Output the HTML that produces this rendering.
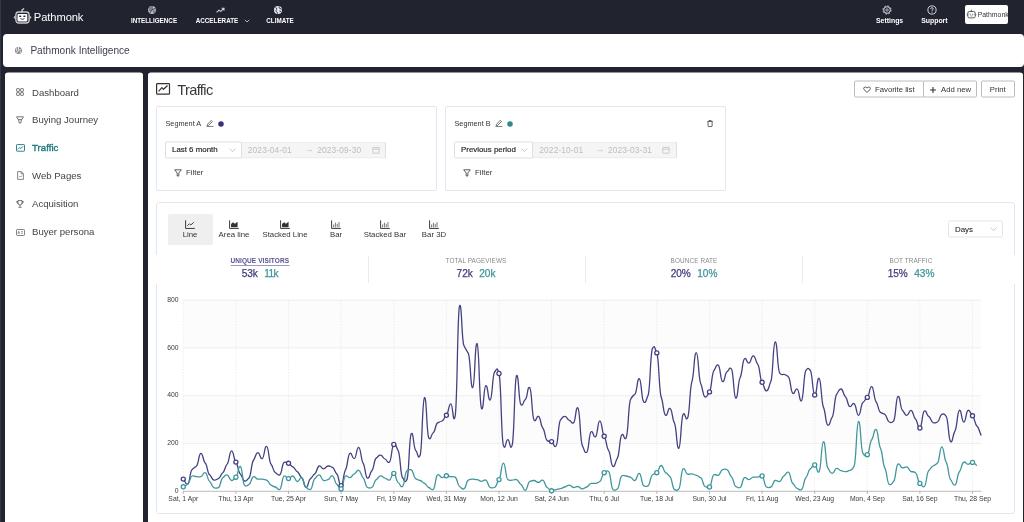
<!DOCTYPE html>
<html lang="en">
<head>
<meta charset="utf-8">
<title>Pathmonk Intelligence - Traffic</title>
<style>
*{box-sizing:border-box;margin:0;padding:0}
html,body{width:1024px;height:522px;overflow:hidden}
body{background:#21232f;font-family:"Liberation Sans",Arial,sans-serif;color:#3a3a3a;position:relative}
.abs{position:absolute}
.t{position:absolute;white-space:nowrap;line-height:1}
#wrap{position:absolute;left:0;top:0;width:1024px;height:522px;overflow:hidden;will-change:transform}
svg{position:absolute;overflow:visible}
/* header */
#leftedge{left:0;top:0;width:1.4px;height:522px;background:#343744}
#logo-text{left:33.8px;top:11.8px;font-size:11.2px;color:#fff;letter-spacing:-0.1px}
.nav{font-size:6.3px;font-weight:bold;color:#fff;transform:translateX(-50%);letter-spacing:0}
.navr{font-size:6.9px;color:#fff;transform:translateX(-50%);font-weight:bold}
#userbox{left:965.2px;top:5.2px;width:43.3px;height:19px;overflow:hidden;background:#fff;border-radius:2px}
/* subheader */
#subbar{left:3px;top:34px;width:1021.3px;height:33px;background:#fff;border-radius:4px}
#subbar .t{left:27.4px;top:11.7px;font-size:10.1px;color:#3d3f4a}
/* sidebar */
#side{left:5px;top:73px;box-shadow:0 -0.6px 0 #fff;width:137.7px;height:460px;background:#fff;border-radius:3px}
.si{left:27px;font-size:9.6px;color:#444}
.si.act{color:#17767c;-webkit-text-stroke:0.35px #17767c;letter-spacing:0.05px}
/* main */
#main{left:148px;top:73px;box-shadow:0 -0.6px 0 #fff;width:874.7px;height:460px;background:#fff;border-radius:3px}
#title{left:29.2px;top:9.7px;font-size:14.6px;color:#3a3a3a;letter-spacing:-0.62px}
.btn{position:absolute;top:7px;height:17px;transform:translateY(0.5px);border:1px solid #bdbdbd;border-radius:1.5px;background:#fff;font-size:7.75px;color:#333;white-space:nowrap;line-height:15.4px}
.card{position:absolute;border:1px solid #e4e5f1;border-radius:2px;background:#fff}
.seg{font-size:7.3px;color:#333}
.sel{position:absolute;transform:translateY(0.5px);height:17px;border:1px solid #dedfe4;border-radius:1.5px 0 0 1.5px;background:#fff;font-size:7.9px;color:#222;line-height:14.4px;-webkit-text-stroke:0.15px;padding-left:6px;white-space:nowrap}
.rng{position:absolute;transform:translateY(0.5px);height:17px;border:1px solid #dedfe4;border-left:none;border-radius:0 1.5px 1.5px 0;background:#f5f5f5;font-size:8.4px;letter-spacing:0.12px;color:#bdbdbd;line-height:14.4px;white-space:nowrap}
.flt{font-size:7.8px;color:#333}
.ct{font-size:7.8px;color:#333;transform:translateX(-50%)}
.sl{font-size:6.4px;color:#8a8a8a;transform:translateX(-50%);letter-spacing:0.1px}
.sv{font-size:10.1px;transform:translateX(-50%);word-spacing:3.5px;-webkit-text-stroke:0.25px}
.p{color:#3f3d7a}.g{color:#3d9599}
.vdiv{position:absolute;top:183px;width:1px;height:27px;background:#ebebeb}
.ax{font-family:"Liberation Sans",Arial,sans-serif;font-size:6.8px;fill:#3a3a3a}
</style>
</head>
<body>
<div id="wrap">
<div class="abs" id="leftedge"></div>

<!-- HEADER -->
<svg style="left:13.3px;top:7.7px" width="19" height="17" viewBox="0 0 19 17">
  <path d="M8.6 4 Q8.8 1.6 10.6 0.9" stroke="#c8c9ce" stroke-width="1.5" fill="none" stroke-linecap="round"/>
  <rect x="2.9" y="4" width="13.2" height="11" rx="2.8" fill="none" stroke="#c8c9ce" stroke-width="1.3"/>
  <path d="M2.9 7.6 L1.2 9.4 L2.9 11.2 M16.1 7.6 L17.8 9.4 L16.1 11.2" stroke="#c8c9ce" stroke-width="1.2" fill="none" stroke-linejoin="round"/>
  <rect x="4.5" y="6" width="9.8" height="7.4" rx="0.8" fill="#fff"/>
  <rect x="6.2" y="7.6" width="2" height="1.4" fill="#21232f"/>
  <rect x="10.4" y="7.6" width="2" height="1.4" fill="#21232f"/>
  <path d="M7.4 10.6 Q9.4 12.2 11.4 10.6" stroke="#21232f" stroke-width="0.9" fill="none"/>
</svg>
<div class="t" id="logo-text">Pathmonk</div>

<svg style="left:147px;top:5.2px" width="10" height="10" viewBox="0 0 10 10">
  <circle cx="5" cy="5" r="3.9" fill="#b9bac1"/>
  <path d="M5 5 L5 1 M5 5 L8.4 3.2 M5 5 L2.6 8.2 M3 2 L3 6 M7 5.5 L7 8" stroke="#21232f" stroke-width="0.8" fill="none"/>
</svg>
<div class="t nav" style="left:154px;top:17.5px">INTELLIGENCE</div>
<svg style="left:215.5px;top:7px" width="9" height="7" viewBox="0 0 9 7">
  <path d="M0.6 5.4 L3 3.2 L4.8 4.4 L7.6 1.6 M5.6 1.2 L8 1.2 L8 3.6" stroke="#d5d6db" stroke-width="1.1" fill="none"/>
</svg>
<div class="t nav" style="left:217px;top:17.5px">ACCELERATE</div>
<svg style="left:243.5px;top:18.5px" width="6" height="4" viewBox="0 0 6 4"><path d="M0.8 0.8 L3 3 L5.2 0.8" stroke="#d5d6db" stroke-width="0.8" fill="none"/></svg>
<svg style="left:273px;top:5px" width="10" height="10" viewBox="0 0 10 10">
  <circle cx="5" cy="5" r="4" fill="#e6e7ea"/>
  <path d="M2.6 2.2 Q4 3 3.6 4.4 Q2.6 5.4 3.4 6.6 Q4.6 7 4.6 8.6 M6.2 1.4 Q5.6 3 7 3.6 Q8.2 3.6 8.6 4.6 M6.4 6 Q7.6 5.8 7.8 7" stroke="#21232f" stroke-width="0.9" fill="none"/>
</svg>
<div class="t nav" style="left:280px;top:17.5px">CLIMATE</div>

<svg style="left:882.1px;top:5.3px" width="10" height="10" viewBox="0 0 10 10">
  <circle cx="5" cy="5" r="3.3" fill="none" stroke="#d5d6db" stroke-width="1"/>
  <circle cx="5" cy="5" r="4.1" fill="none" stroke="#d5d6db" stroke-width="1" stroke-dasharray="1.6 1.62"/>
  <circle cx="5" cy="5" r="1.2" fill="none" stroke="#d5d6db" stroke-width="0.8"/>
</svg>
<div class="t navr" style="left:889.6px;top:17.8px">Settings</div>
<svg style="left:926.5px;top:5.3px" width="10" height="10" viewBox="0 0 10 10">
  <circle cx="5" cy="5" r="4.1" fill="none" stroke="#d5d6db" stroke-width="1"/>
  <path d="M3.7 4 Q3.7 2.7 5 2.7 Q6.3 2.700 6.3 3.800 Q6.300 4.600 5 5.200 L5 5.900" stroke="#d5d6db" stroke-width="0.9" fill="none"/>
  <circle cx="5" cy="7.1" r="0.55" fill="#d5d6db"/>
</svg>
<div class="t navr" style="left:934.4px;top:17.8px">Support</div>
<div class="abs" id="userbox">
  <svg style="left:0.8px;top:4px" width="11" height="10" viewBox="0 0 19 17">
    <path d="M8.6 4 Q8.800 1.600 10.600 0.900" stroke="#444" stroke-width="1.500" fill="none"/>
    <rect x="3.2" y="4.2" width="12.6" height="11" rx="2.6" fill="none" stroke="#444" stroke-width="1.500"/>
    <path d="M3.2 8.2 L1.4 9.8 L3.2 11.400 M15.800 8.200 L17.600 9.800 L15.800 11.400" stroke="#444" stroke-width="1.300" fill="none"/>
    <rect x="6.4" y="8" width="1.800" height="1.600" fill="#444"/><rect x="10.800" y="8" width="1.800" height="1.600" fill="#444"/>
    <path d="M7.600 11.400 Q9.500 12.800 11.400 11.400" stroke="#444" stroke-width="1" fill="none"/>
  </svg>
  <div class="t" style="left:12.5px;top:6.9px;font-size:6.9px;color:#333">Pathmonk</div>
</div>

<!-- SUB HEADER -->
<div class="abs" id="subbar">
  <svg style="left:11px;top:12.3px" width="9" height="9" viewBox="0 0 10 10">
    <circle cx="5" cy="5" r="3.9" fill="#8a8b92"/>
    <path d="M5 5 L5 1 M5 5 L8.4 3.2 M5 5 L2.6 8.2 M3 2 L3 6 M7 5.5 L7 8" stroke="#fff" stroke-width="0.8" fill="none"/>
  </svg>
  <div class="t">Pathmonk Intelligence</div>
</div>

<!-- SIDEBAR -->
<div class="abs" id="side">
  <svg style="left:11px;top:15px" width="8" height="8" viewBox="0 0 8 8"><g fill="none" stroke="#555" stroke-width="0.8"><rect x="0.6" y="0.6" width="2.8" height="2.8" rx="0.5"/><rect x="4.6" y="0.6" width="2.8" height="2.8" rx="0.5"/><rect x="0.6" y="4.6" width="2.8" height="2.8" rx="0.5"/><rect x="4.6" y="4.6" width="2.8" height="2.8" rx="0.5"/></g></svg>
  <div class="t si" style="top:14.5px">Dashboard</div>
  <svg style="left:11px;top:43px" width="8" height="8" viewBox="0 0 8 8"><path d="M0.6 0.8 H7.4 L5.8 3.6 H2.2 Z M2.6 3.6 L3.2 7 H4.8 L5.4 3.6" fill="none" stroke="#555" stroke-width="0.8" stroke-linejoin="round"/></svg>
  <div class="t si" style="top:42.2px">Buying Journey</div>
  <svg style="left:11px;top:71px" width="9" height="8" viewBox="0 0 9 8"><rect x="0.5" y="0.6" width="8" height="6.6" rx="0.6" fill="none" stroke="#17747a" stroke-width="0.9"/><path d="M1.8 5.4 L3.6 3.6 L4.8 4.6 L7 2.4" fill="none" stroke="#17747a" stroke-width="0.9"/></svg>
  <div class="t si act" style="top:70.2px">Traffic</div>
  <svg style="left:12px;top:97.8px" width="7" height="9" viewBox="0 0 7 9"><path d="M0.6 0.6 H4.4 L6.4 2.6 V8.4 H0.6 Z M4.2 0.8 V2.8 H6.2" fill="none" stroke="#666" stroke-width="0.8" stroke-linejoin="round"/><path d="M2 6.4 L3 5.2 L3.8 6 L5 4.6" fill="none" stroke="#666" stroke-width="0.6"/></svg>
  <div class="t si" style="top:97.7px">Web Pages</div>
  <svg style="left:11px;top:127px" width="8" height="8" viewBox="0 0 8 8"><path d="M2 0.6 H6 V3 Q6 5 4 5 Q2 5 2 3 Z M2 1.4 H0.7 Q0.7 3.4 2.2 3.6 M6 1.4 H7.3 Q7.3 3.4 5.8 3.6 M4 5 V6.8 M2.4 7.3 H5.6" fill="none" stroke="#555" stroke-width="0.8" stroke-linejoin="round"/></svg>
  <div class="t si" style="top:125.7px">Acquisition</div>
  <svg style="left:11px;top:155.500px" width="9" height="7" viewBox="0 0 9 7"><rect x="0.5" y="0.5" width="8" height="6" rx="0.7" fill="none" stroke="#666" stroke-width="0.8"/><path d="M1.8 4.8 L2.7 2.2 L3.6 4.8 M2.1 4 H3.3 M5 2.6 H7 M5 4.2 H7" fill="none" stroke="#666" stroke-width="0.6"/></svg>
  <div class="t si" style="top:154.2px">Buyer persona</div>
</div>

<!-- MAIN -->
<div class="abs" id="main">
  <svg style="left:8.1px;top:10.3px" width="15" height="12" viewBox="0 0 15 12"><rect x="0.6" y="0.6" width="12.9" height="10.6" rx="0.8" fill="none" stroke="#333" stroke-width="1.2"/><path d="M2.6 8.3 L5.9 4.7 L7.5 6.3 L11.5 2.5" fill="none" stroke="#333" stroke-width="1.2"/></svg>
  <div class="t" id="title">Traffic</div>

  <div class="btn" style="left:706px;width:70px;padding-left:20px">Favorite list</div>
  <svg style="left:714.5px;top:12.6px" width="8" height="7.4" viewBox="0 0 8 7"><path d="M4 6.2 L1 3.4 Q0.2 2 1.2 1.1 Q2.6 0.3 4 1.8 Q5.400 0.3 6.800 1.1 Q7.800 2 7 3.4 Z" fill="none" stroke="#333" stroke-width="0.8" stroke-linejoin="round"/></svg>
  <div class="btn" style="left:775px;width:53.5px;padding-left:17px;border-radius:0 1.5px 1.5px 0">Add new</div>
  <svg style="left:781.6px;top:14.1px" width="6" height="6" viewBox="0 0 6 6"><path d="M3 0.1 V5.9 M0.1 3 H5.9" stroke="#2a2a2a" stroke-width="1.05"/></svg>
  <div class="btn" style="left:833px;width:33.5px;text-align:center">Print</div>

  <!-- Segment A -->
  <div class="card" style="left:8px;top:33px;width:280.5px;height:85px">
    <div class="t seg" style="left:8.5px;top:13px">Segment A</div>
    <svg style="left:49.4px;top:12.4px" width="8" height="8" viewBox="0 0 8 8"><path d="M1.4 5.400 L5.200 1.400 L6.400 2.600 L2.600 6.400 L1.200 6.600 Z" fill="none" stroke="#333" stroke-width="0.7" stroke-linejoin="round"/><path d="M0.600 7.500 H7.400" stroke="#333" stroke-width="0.6"/></svg>
    <svg style="left:61.3px;top:14px" width="6" height="6" viewBox="0 0 6 6"><circle cx="3" cy="3" r="2.75" fill="#34327a"/></svg>
    <div class="sel" style="left:8px;top:34px;width:76.5px">Last 6 month</div>
    <svg style="left:72.3px;top:41px" width="7" height="4.5" viewBox="0 0 7 4.5"><path d="M0.6 0.7 L3.5 3.6 L6.4 0.7" stroke="#b5b5b5" stroke-width="0.75" fill="none"/></svg>
    <div class="rng" style="left:84.5px;top:34px;width:144.5px"><span style="position:absolute;left:6.3px">2023-04-01</span><span style="position:absolute;left:63.5px;top:-0.8px;font-size:9px;letter-spacing:0;color:#c4c4c4">→</span><span style="position:absolute;left:75.7px">2023-09-30</span></div>
    <svg style="left:215px;top:39px" width="8" height="8" viewBox="0 0 8 8"><rect x="0.800" y="1.400" width="6.400" height="5.800" rx="0.500" fill="none" stroke="#bcbcbc" stroke-width="0.700"/><path d="M0.800 3.200 H7.200" stroke="#bcbcbc" stroke-width="0.700"/></svg>
    <svg style="left:17px;top:62px" width="8" height="8" viewBox="0 0 8 8"><path d="M0.700 0.800 H7.300 L4.800 4 V7 H3.200 V4 Z" fill="none" stroke="#333" stroke-width="0.800" stroke-linejoin="round"/></svg>
    <div class="t flt" style="left:29px;top:62px">Filter</div>
  </div>
  <!-- Segment B -->
  <div class="card" style="left:297px;top:33px;width:280.5px;height:85px">
    <div class="t seg" style="left:8.5px;top:13px">Segment B</div>
    <svg style="left:49.4px;top:12.4px" width="8" height="8" viewBox="0 0 8 8"><path d="M1.4 5.400 L5.200 1.400 L6.400 2.600 L2.600 6.400 L1.200 6.600 Z" fill="none" stroke="#333" stroke-width="0.7" stroke-linejoin="round"/><path d="M0.600 7.500 H7.400" stroke="#333" stroke-width="0.6"/></svg>
    <svg style="left:61.3px;top:14px" width="6" height="6" viewBox="0 0 6 6"><circle cx="3" cy="3" r="2.75" fill="#2e8a90"/></svg>
    <svg style="left:260.6px;top:13.2px" width="6.2" height="7.1" viewBox="0 0 7 8"><path d="M0.5 1.6 H6.5 M2.4 1.600 V0.600 H4.600 V1.600 M1.200 1.600 V6.800 Q1.200 7.400 1.800 7.400 H5.200 Q5.800 7.400 5.800 6.800 V1.600" fill="none" stroke="#333" stroke-width="0.85" stroke-linejoin="round"/></svg>
    <div class="sel" style="left:8px;top:34px;width:79px">Previous period</div>
    <svg style="left:75.3px;top:41px" width="7" height="4.5" viewBox="0 0 7 4.5"><path d="M0.6 0.7 L3.5 3.6 L6.4 0.7" stroke="#b5b5b5" stroke-width="0.75" fill="none"/></svg>
    <div class="rng" style="left:87px;top:34px;width:144px"><span style="position:absolute;left:6.3px">2022-10-01</span><span style="position:absolute;left:62.5px;top:-0.8px;font-size:9px;letter-spacing:0;color:#c4c4c4">→</span><span style="position:absolute;left:75px">2023-03-31</span></div>
    <svg style="left:216px;top:39px" width="8" height="8" viewBox="0 0 8 8"><rect x="0.800" y="1.400" width="6.400" height="5.800" rx="0.500" fill="none" stroke="#bcbcbc" stroke-width="0.700"/><path d="M0.800 3.200 H7.200" stroke="#bcbcbc" stroke-width="0.700"/></svg>
    <svg style="left:17px;top:62px" width="8" height="8" viewBox="0 0 8 8"><path d="M0.700 0.800 H7.300 L4.800 4 V7 H3.200 V4 Z" fill="none" stroke="#333" stroke-width="0.800" stroke-linejoin="round"/></svg>
    <div class="t flt" style="left:29px;top:62px">Filter</div>
  </div>

  <!-- Chart card -->
  <div class="card" style="left:8px;top:129px;width:859px;height:311.5px;border-radius:3px"></div>
  <div class="abs" style="left:20px;top:141px;width:44.5px;height:30.5px;background:#efefef;border-radius:2px"></div>
  <svg style="left:37.0px;top:146.6px" width="10.2" height="9" viewBox="0 0 9 8"><path d="M0.5 0.3V7.5H8.7" fill="none" stroke="#333" stroke-width="0.85"/><path d="M2 5.2L3.8 3.4L5.2 4.4L7.8 2" fill="none" stroke="#333" stroke-width="0.8"/></svg>
<svg style="left:81.0px;top:146.6px" width="10.2" height="9" viewBox="0 0 9 8"><path d="M0.5 0.3V7.5H8.7" fill="none" stroke="#333" stroke-width="0.85"/><path d="M1.8 6.4V3.6L3.6 2L5.2 3.4L7.6 1.6V6.4Z" fill="#333"/></svg>
<svg style="left:132.0px;top:146.6px" width="10.2" height="9" viewBox="0 0 9 8"><path d="M0.5 0.3V7.5H8.7" fill="none" stroke="#333" stroke-width="0.85"/><path d="M1.8 6.4V3.6L3.6 2L5.2 3.4L7.6 1.6V6.4Z" fill="#333"/></svg>
<svg style="left:183.0px;top:146.6px" width="10.2" height="9" viewBox="0 0 9 8"><path d="M0.5 0.3V7.5H8.7" fill="none" stroke="#333" stroke-width="0.85"/><path d="M2.3 6.6V4M3.9 6.6V2.4M5.5 6.6V3.4M7.1 6.6V1.8" fill="none" stroke="#555" stroke-width="0.7"/></svg>
<svg style="left:232.0px;top:146.6px" width="10.2" height="9" viewBox="0 0 9 8"><path d="M0.5 0.3V7.5H8.7" fill="none" stroke="#333" stroke-width="0.85"/><path d="M2.3 6.6V4M3.9 6.6V2.4M5.5 6.6V3.4M7.1 6.6V1.8" fill="none" stroke="#555" stroke-width="0.7"/></svg>
<svg style="left:281.0px;top:146.6px" width="10.2" height="9" viewBox="0 0 9 8"><path d="M0.5 0.3V7.5H8.7" fill="none" stroke="#333" stroke-width="0.85"/><path d="M2.3 6.6V4M3.9 6.6V2.4M5.5 6.6V3.4M7.1 6.6V1.8" fill="none" stroke="#555" stroke-width="0.7"/></svg>
  <div class="t ct" style="left:42px;top:158px">Line</div>
  <div class="t ct" style="left:86px;top:158px">Area line</div>
  <div class="t ct" style="left:137px;top:158px">Stacked Line</div>
  <div class="t ct" style="left:188px;top:158px">Bar</div>
  <div class="t ct" style="left:237px;top:158px">Stacked Bar</div>
  <div class="t ct" style="left:286px;top:158px">Bar 3D</div>
  <div class="sel" style="left:800px;top:147px;width:55px;border-color:#e2e4ec;border-radius:2px;line-height:15.6px;-webkit-text-stroke:0.05px">Days</div>
  <svg style="left:842.2px;top:153.9px" width="7" height="4.5" viewBox="0 0 7 4.5"><path d="M0.6 0.7 L3.5 3.6 L6.4 0.7" stroke="#b5b5b5" stroke-width="0.75" fill="none"/></svg>

  <!-- Stats -->
  <div class="abs" style="left:4px;top:182px;width:866px;height:28.500px;background:#fff"></div>
  <div class="t sl p" style="left:111.8px;top:185.4px;font-weight:bold;font-size:6.5px;color:#55538f;border-bottom:0.8px solid #9a98c0;padding-bottom:0.5px">UNIQUE VISITORS</div>
  <div class="t sv" style="left:111.8px;top:196px"><span class="p">53k</span> <span class="g" style="letter-spacing:-0.6px">11k</span></div>
  <div class="vdiv" style="left:220px"></div>
  <div class="t sl" style="left:328px;top:185.4px">TOTAL PAGEVIEWS</div>
  <div class="t sv" style="left:328px;top:196px"><span class="p">72k</span> <span class="g">20k</span></div>
  <div class="vdiv" style="left:437px"></div>
  <div class="t sl" style="left:546px;top:185.4px">BOUNCE RATE</div>
  <div class="t sv" style="left:546px;top:196px"><span class="p">20%</span> <span class="g">10%</span></div>
  <div class="vdiv" style="left:654px"></div>
  <div class="t sl" style="left:763px;top:185.4px">BOT TRAFFIC</div>
  <div class="t sv" style="left:763px;top:196px"><span class="p">15%</span> <span class="g">43%</span></div>
</div>

<!-- CHART -->
<svg style="left:0;top:0" width="1024" height="522" viewBox="0 0 1024 522">
<rect x="183.3" y="395.7" width="798.0" height="47.8" fill="#fcfcfc"/>
<rect x="183.3" y="300.1" width="798.0" height="47.8" fill="#fcfcfc"/>
<path d="M183.3 443.5H981.3" stroke="#efefef" stroke-width="1"/>
<path d="M183.3 395.7H981.3" stroke="#efefef" stroke-width="1"/>
<path d="M183.3 347.9H981.3" stroke="#efefef" stroke-width="1"/>
<path d="M183.3 300.1H981.3" stroke="#efefef" stroke-width="1"/>
<path d="M183.3 300.1V491.3" stroke="#e9e9e9" stroke-width="0.8" stroke-dasharray="1.5 1.5"/>
<path d="M183.3 491.3v2.5" stroke="#999" stroke-width="0.8"/>
<text class="ax" x="183.3" y="500.9" text-anchor="middle">Sat, 1 Apr</text>
<path d="M235.9 300.1V491.3" stroke="#e9e9e9" stroke-width="0.8" stroke-dasharray="1.5 1.5"/>
<path d="M235.9 491.3v2.5" stroke="#999" stroke-width="0.8"/>
<text class="ax" x="235.9" y="500.9" text-anchor="middle">Thu, 13 Apr</text>
<path d="M288.5 300.1V491.3" stroke="#e9e9e9" stroke-width="0.8" stroke-dasharray="1.5 1.5"/>
<path d="M288.5 491.3v2.5" stroke="#999" stroke-width="0.8"/>
<text class="ax" x="288.5" y="500.9" text-anchor="middle">Tue, 25 Apr</text>
<path d="M341.1 300.1V491.3" stroke="#e9e9e9" stroke-width="0.8" stroke-dasharray="1.5 1.5"/>
<path d="M341.1 491.3v2.5" stroke="#999" stroke-width="0.8"/>
<text class="ax" x="341.1" y="500.9" text-anchor="middle">Sun, 7 May</text>
<path d="M393.8 300.1V491.3" stroke="#e9e9e9" stroke-width="0.8" stroke-dasharray="1.5 1.5"/>
<path d="M393.8 491.3v2.5" stroke="#999" stroke-width="0.8"/>
<text class="ax" x="393.8" y="500.9" text-anchor="middle">Fri, 19 May</text>
<path d="M446.4 300.1V491.3" stroke="#e9e9e9" stroke-width="0.8" stroke-dasharray="1.5 1.5"/>
<path d="M446.4 491.3v2.5" stroke="#999" stroke-width="0.8"/>
<text class="ax" x="446.4" y="500.9" text-anchor="middle">Wed, 31 May</text>
<path d="M499.0 300.1V491.3" stroke="#e9e9e9" stroke-width="0.8" stroke-dasharray="1.5 1.5"/>
<path d="M499.0 491.3v2.5" stroke="#999" stroke-width="0.8"/>
<text class="ax" x="499.0" y="500.9" text-anchor="middle">Mon, 12 Jun</text>
<path d="M551.6 300.1V491.3" stroke="#e9e9e9" stroke-width="0.8" stroke-dasharray="1.5 1.5"/>
<path d="M551.6 491.3v2.5" stroke="#999" stroke-width="0.8"/>
<text class="ax" x="551.6" y="500.9" text-anchor="middle">Sat, 24 Jun</text>
<path d="M604.2 300.1V491.3" stroke="#e9e9e9" stroke-width="0.8" stroke-dasharray="1.5 1.5"/>
<path d="M604.2 491.3v2.5" stroke="#999" stroke-width="0.8"/>
<text class="ax" x="604.2" y="500.9" text-anchor="middle">Thu, 6 Jul</text>
<path d="M656.8 300.1V491.3" stroke="#e9e9e9" stroke-width="0.8" stroke-dasharray="1.5 1.5"/>
<path d="M656.8 491.3v2.5" stroke="#999" stroke-width="0.8"/>
<text class="ax" x="656.8" y="500.9" text-anchor="middle">Tue, 18 Jul</text>
<path d="M709.5 300.1V491.3" stroke="#e9e9e9" stroke-width="0.8" stroke-dasharray="1.5 1.5"/>
<path d="M709.5 491.3v2.5" stroke="#999" stroke-width="0.8"/>
<text class="ax" x="709.5" y="500.9" text-anchor="middle">Sun, 30 Jul</text>
<path d="M762.1 300.1V491.3" stroke="#e9e9e9" stroke-width="0.8" stroke-dasharray="1.5 1.5"/>
<path d="M762.1 491.3v2.5" stroke="#999" stroke-width="0.8"/>
<text class="ax" x="762.1" y="500.9" text-anchor="middle">Fri, 11 Aug</text>
<path d="M814.7 300.1V491.3" stroke="#e9e9e9" stroke-width="0.8" stroke-dasharray="1.5 1.5"/>
<path d="M814.7 491.3v2.5" stroke="#999" stroke-width="0.8"/>
<text class="ax" x="814.7" y="500.9" text-anchor="middle">Wed, 23 Aug</text>
<path d="M867.3 300.1V491.3" stroke="#e9e9e9" stroke-width="0.8" stroke-dasharray="1.5 1.5"/>
<path d="M867.3 491.3v2.5" stroke="#999" stroke-width="0.8"/>
<text class="ax" x="867.3" y="500.9" text-anchor="middle">Mon, 4 Sep</text>
<path d="M919.9 300.1V491.3" stroke="#e9e9e9" stroke-width="0.8" stroke-dasharray="1.5 1.5"/>
<path d="M919.9 491.3v2.5" stroke="#999" stroke-width="0.8"/>
<text class="ax" x="919.9" y="500.9" text-anchor="middle">Sat, 16 Sep</text>
<path d="M972.5 300.1V491.3" stroke="#e9e9e9" stroke-width="0.8" stroke-dasharray="1.5 1.5"/>
<path d="M972.5 491.3v2.5" stroke="#999" stroke-width="0.8"/>
<text class="ax" x="972.5" y="500.9" text-anchor="middle">Thu, 28 Sep</text>
<path d="M183.3 491.3H981.3" stroke="#aaa" stroke-width="0.8"/>
<text class="ax" x="178.6" y="492.9" text-anchor="end">0</text>
<text class="ax" x="178.6" y="445.1" text-anchor="end">200</text>
<text class="ax" x="178.6" y="397.3" text-anchor="end">400</text>
<text class="ax" x="178.6" y="349.5" text-anchor="end">600</text>
<text class="ax" x="178.6" y="301.7" text-anchor="end">800</text>
<path d="M183.3 479.1C184.4 479.6 185.4 485.1 187.7 484.1C190.0 483.2 189.8 471.4 192.1 469.6C194.3 467.7 194.2 467.6 196.5 466.0C198.7 464.3 198.6 453.6 200.8 453.3C203.1 453.0 202.9 460.9 205.2 463.1C207.5 465.2 207.3 473.1 209.6 474.8C211.9 476.5 211.7 479.7 214.0 480.1C216.3 480.4 216.1 479.4 218.4 478.6C220.7 477.9 220.5 474.1 222.8 472.7C225.0 471.2 224.9 466.2 227.1 464.1C229.4 461.9 229.3 451.1 231.5 450.9C233.8 450.7 233.6 459.8 235.9 462.1C238.2 464.4 238.0 472.0 240.3 473.9C242.6 475.7 242.4 480.6 244.7 481.0C247.0 481.4 246.8 479.8 249.1 477.7C251.3 475.6 251.2 462.7 253.5 460.2C255.7 457.7 255.6 452.7 257.8 452.6C260.1 452.4 259.9 459.2 262.2 458.6C264.5 457.9 264.3 445.8 266.6 446.4C268.9 446.9 268.7 461.4 271.0 464.1C273.3 466.7 273.1 471.6 275.4 472.7C277.7 473.7 277.5 475.8 279.8 474.8C282.0 473.8 281.9 463.5 284.1 462.4C286.4 461.2 286.3 462.9 288.5 463.3C290.8 463.8 290.6 466.1 292.9 466.9C295.2 467.8 295.0 470.6 297.3 471.7C299.6 472.8 299.4 476.1 301.7 477.7C304.0 479.3 303.8 487.4 306.1 487.5C308.3 487.6 308.2 480.0 310.5 478.6C312.7 477.3 312.6 475.1 314.8 473.9C317.1 472.6 316.9 466.5 319.2 466.0C321.5 465.5 321.3 468.8 323.6 468.8C325.9 468.8 325.7 466.1 328.0 466.0C330.3 465.8 330.1 466.6 332.4 467.4C334.7 468.2 334.5 472.0 336.8 473.9C339.0 475.7 338.9 486.0 341.1 485.6C343.4 485.2 343.3 473.0 345.5 469.8C347.8 466.6 347.6 454.4 349.9 453.3C352.2 452.2 352.0 459.2 354.3 458.6C356.6 458.0 356.4 446.9 358.7 447.3C361.0 447.8 360.8 460.0 363.1 463.1C365.3 466.2 365.2 477.4 367.5 478.2C369.7 478.9 369.6 472.8 371.8 470.7C374.1 468.7 373.9 459.6 376.2 458.1C378.5 456.5 378.3 455.1 380.6 455.2C382.9 455.3 382.7 458.3 385.0 459.0C387.3 459.7 387.1 463.6 389.4 462.1C391.7 460.7 391.5 445.6 393.8 444.5C396.0 443.3 395.9 447.1 398.1 450.4C400.4 453.8 400.3 474.8 402.5 477.7C404.8 480.6 404.6 484.0 406.9 479.6C409.2 475.2 409.0 436.6 411.3 433.7C413.6 430.8 413.4 448.3 415.7 450.4C418.0 452.6 417.8 460.5 420.1 455.2C422.3 449.9 422.2 399.4 424.5 397.6C426.7 395.9 426.6 434.3 428.8 437.8C431.1 441.3 430.9 434.2 433.2 432.7C435.5 431.3 435.3 424.1 437.6 422.9C439.9 421.8 439.7 421.8 442.0 421.0C444.3 420.3 444.1 417.0 446.4 415.3C448.7 413.6 448.5 403.7 450.8 403.8C453.0 403.9 452.9 426.0 455.1 416.3C457.4 406.5 457.3 313.1 459.5 306.1C461.8 299.0 461.6 340.8 463.9 345.5C466.2 350.2 466.0 349.2 468.3 353.4C470.6 357.6 470.4 388.6 472.7 387.6C475.0 386.6 474.8 341.5 477.1 343.6C479.3 345.7 479.2 404.2 481.5 408.4C483.7 412.6 483.6 386.5 485.8 385.7C488.1 384.8 487.9 401.4 490.2 400.0C492.5 398.6 492.3 374.7 494.6 372.0C496.9 369.4 496.7 366.1 499.0 373.5C501.3 380.8 501.1 438.8 503.4 445.4C505.7 452.0 505.5 439.7 507.8 439.7C510.0 439.7 509.9 451.8 512.1 445.4C514.4 439.0 514.3 379.9 516.5 375.9C518.8 371.8 518.6 402.2 520.9 404.5C523.2 406.9 523.0 401.2 525.3 399.5C527.6 397.8 527.4 385.5 529.7 387.6C532.0 389.6 531.8 417.2 534.1 420.1C536.3 422.9 536.2 415.5 538.5 416.3C540.7 417.0 540.6 425.5 542.8 428.0C545.1 430.4 544.9 439.3 547.2 440.6C549.5 442.0 549.3 441.0 551.6 441.6C553.9 442.1 553.7 448.3 556.0 446.1C558.3 444.0 558.1 423.1 560.4 420.1C562.7 417.1 562.5 416.3 564.8 416.3C567.0 416.3 566.9 419.4 569.1 420.1C571.4 420.7 571.3 424.2 573.5 422.9C575.8 421.7 575.6 405.6 577.9 407.9C580.2 410.1 580.0 441.0 582.3 445.4C584.6 449.9 584.4 453.7 586.7 452.3C589.0 451.0 588.8 433.3 591.1 431.8C593.3 430.2 593.2 437.9 595.5 436.8C597.7 435.7 597.6 420.8 599.8 420.8C602.1 420.7 601.9 433.4 604.2 436.3C606.5 439.3 606.3 447.4 608.6 450.4C610.9 453.4 610.7 465.7 613.0 466.4C615.3 467.2 615.1 461.3 617.4 458.1C619.7 454.9 619.5 436.7 621.8 434.7C624.0 432.6 623.9 441.3 626.1 437.8C628.4 434.3 628.3 403.9 630.5 399.5C632.8 395.2 632.6 396.3 634.9 394.3C637.2 392.2 637.0 378.0 639.3 378.7C641.6 379.5 641.4 400.3 643.7 401.9C646.0 403.6 645.8 400.6 648.1 395.2C650.3 389.9 650.2 352.6 652.5 348.4C654.7 344.1 654.6 348.1 656.8 352.9C659.1 357.8 658.9 390.7 661.2 396.9C663.5 403.1 663.3 414.2 665.6 415.3C667.9 416.4 667.7 407.6 670.0 408.4C672.3 409.1 672.1 419.0 674.4 422.9C676.7 426.9 676.5 449.1 678.8 448.3C681.0 447.4 680.9 417.4 683.1 414.3C685.4 411.3 685.3 421.4 687.5 418.2C689.8 414.9 689.6 388.1 691.9 381.6C694.2 375.1 694.0 352.5 696.3 352.7C698.6 352.9 698.4 379.1 700.7 383.5C703.0 387.9 702.8 396.1 705.1 396.9C707.3 397.7 707.2 394.5 709.5 391.9C711.7 389.3 711.6 373.5 713.8 370.8C716.1 368.2 715.9 364.0 718.2 365.1C720.5 366.2 720.3 380.9 722.6 381.6C724.9 382.3 724.7 373.1 727.0 371.8C729.3 370.5 729.1 366.3 731.4 368.9C733.7 371.6 733.5 397.2 735.8 398.1C738.0 399.0 737.9 381.7 740.1 377.8C742.4 373.8 742.3 360.1 744.5 358.7C746.8 357.2 746.6 363.5 748.9 363.2C751.2 362.9 751.0 355.7 753.3 355.8C755.6 355.9 755.4 361.5 757.7 364.2C760.0 366.8 759.8 379.6 762.1 382.3C764.3 385.0 764.2 391.0 766.5 390.9C768.7 390.8 768.6 386.5 770.8 381.6C773.1 376.7 772.9 342.8 775.2 341.9C777.5 341.0 777.3 369.5 779.6 372.8C781.9 376.0 781.7 374.0 784.0 374.4C786.3 374.8 786.1 374.9 788.4 376.8C790.7 378.7 790.5 392.1 792.8 393.3C795.0 394.5 794.9 388.3 797.1 389.0C799.4 389.7 799.3 402.6 801.5 400.7C803.8 398.9 803.6 373.4 805.9 370.4C808.2 367.3 808.0 367.9 810.3 370.4C812.6 372.8 812.4 394.2 814.7 395.0C817.0 395.8 816.8 377.0 819.1 378.3C821.3 379.5 821.2 402.7 823.5 407.4C825.7 412.1 825.6 424.1 827.8 425.1C830.1 426.1 829.9 420.3 832.2 417.2C834.5 414.1 834.3 397.1 836.6 394.3C838.9 391.4 838.7 388.8 841.0 389.0C843.3 389.2 843.1 394.9 845.4 396.7C847.7 398.4 847.5 405.8 849.8 406.5C852.0 407.1 851.9 402.7 854.1 403.6C856.4 404.5 856.3 415.4 858.5 415.3C860.8 415.2 860.6 404.4 862.9 402.6C865.2 400.8 865.0 399.0 867.3 397.4C869.6 395.8 869.4 386.2 871.7 386.6C874.0 387.0 873.8 399.1 876.1 401.7C878.3 404.3 878.2 411.2 880.5 412.4C882.7 413.7 882.6 413.4 884.8 414.3C887.1 415.3 886.9 421.3 889.2 422.0C891.5 422.7 891.3 423.6 893.6 421.0C895.9 418.5 895.7 397.5 898.0 396.4C900.3 395.3 900.1 408.4 902.4 410.3C904.7 412.2 904.5 415.3 906.8 415.3C909.0 415.3 908.9 409.9 911.1 410.3C913.4 410.7 913.3 417.4 915.5 419.1C917.8 420.9 917.6 428.8 919.9 428.0C922.2 427.2 922.0 412.2 924.3 411.0C926.6 409.8 926.4 415.1 928.7 416.3C931.0 417.4 930.8 422.1 933.1 422.7C935.3 423.3 935.2 422.8 937.5 422.0C939.7 421.2 939.6 414.9 941.8 414.3C944.1 413.8 943.9 413.5 946.2 416.3C948.5 419.0 948.3 440.1 950.6 441.6C952.9 443.0 952.7 434.0 955.0 430.8C957.3 427.7 957.1 411.2 959.4 410.3C961.7 409.4 961.5 422.0 963.8 422.0C966.0 422.0 965.9 410.9 968.1 410.3C970.4 409.7 970.3 414.2 972.5 415.8C974.8 417.4 974.6 424.1 976.9 426.1C979.2 428.0 980.2 434.4 981.3 435.4" fill="none" stroke="#434180" stroke-width="1.3" stroke-linejoin="round"/>
<path d="M183.3 486.8C184.4 486.5 185.4 485.4 187.7 484.4C190.0 483.3 189.8 476.8 192.1 476.0C194.3 475.2 194.2 476.6 196.5 476.7C198.7 476.8 198.6 477.1 200.8 476.7C203.1 476.3 202.9 472.2 205.2 472.7C207.5 473.1 207.3 480.0 209.6 481.5C211.9 483.0 211.7 487.1 214.0 487.7C216.3 488.3 216.1 488.7 218.4 487.7C220.7 486.7 220.5 479.0 222.8 477.7C225.0 476.4 224.9 474.5 227.1 474.8C229.4 475.1 229.3 480.3 231.5 480.5C233.8 480.8 233.6 478.6 235.9 477.2C238.2 475.8 238.0 465.6 240.3 466.4C242.6 467.3 242.4 483.8 244.7 485.6C247.0 487.4 246.8 485.3 249.1 484.4C251.3 483.5 251.2 477.2 253.5 476.7C255.7 476.2 255.6 478.9 257.8 479.1C260.1 479.3 259.9 479.0 262.2 479.1C264.5 479.2 264.3 479.5 266.6 480.1C268.9 480.7 268.7 484.4 271.0 485.1C273.3 485.8 273.1 486.6 275.4 487.0C277.7 487.4 277.5 490.5 279.8 489.4C282.0 488.3 281.9 477.1 284.1 476.0C286.4 474.9 286.3 478.6 288.5 478.6C290.8 478.6 290.6 475.7 292.9 476.0C295.2 476.3 295.0 481.3 297.3 481.5C299.6 481.7 299.4 477.1 301.7 477.7C304.0 478.3 303.8 486.3 306.1 487.5C308.3 488.6 308.2 490.3 310.5 489.4C312.7 488.5 312.6 480.1 314.8 478.6C317.1 477.2 316.9 474.6 319.2 474.8C321.5 475.0 321.3 480.1 323.6 480.5C325.9 481.0 325.7 480.1 328.0 479.6C330.3 479.1 330.1 475.3 332.4 475.8C334.7 476.2 334.5 483.1 336.8 484.4C339.0 485.7 338.9 489.7 341.1 488.9C343.4 488.1 343.3 477.1 345.5 476.0C347.8 474.9 347.6 477.9 349.9 477.7C352.2 477.5 352.0 474.6 354.3 473.9C356.6 473.1 356.4 469.9 358.7 470.3C361.0 470.7 360.8 476.0 363.1 477.7C365.3 479.4 365.2 486.5 367.5 487.5C369.7 488.5 369.6 488.3 371.8 487.5C374.1 486.7 373.9 480.8 376.2 479.6C378.5 478.4 378.3 475.9 380.6 475.8C382.9 475.6 382.7 477.7 385.0 478.2C387.3 478.6 387.1 480.5 389.4 480.1C391.7 479.6 391.5 473.1 393.8 473.4C396.0 473.6 395.9 481.1 398.1 482.5C400.4 483.8 400.3 487.7 402.5 486.5C404.8 485.3 404.6 472.4 406.9 470.7C409.2 469.1 409.0 469.0 411.3 469.8C413.6 470.6 413.4 477.6 415.7 478.6C418.0 479.7 417.8 480.1 420.1 480.5C422.3 481.0 422.2 482.7 424.5 483.4C426.7 484.1 426.6 486.9 428.8 487.5C431.1 488.1 430.9 490.7 433.2 489.4C435.5 488.1 435.3 476.0 437.6 474.8C439.9 473.6 439.7 477.6 442.0 477.7C444.3 477.8 444.1 475.9 446.4 475.8C448.7 475.7 448.5 476.6 450.8 476.7C453.0 476.9 452.9 476.2 455.1 477.2C457.4 478.2 457.3 485.3 459.5 486.5C461.8 487.7 461.6 489.6 463.9 488.9C466.2 488.3 466.0 481.0 468.3 480.1C470.6 479.1 470.4 479.2 472.7 479.1C475.0 479.1 474.8 479.4 477.1 479.6C479.3 479.8 479.2 481.2 481.5 481.3C483.7 481.3 483.6 479.4 485.8 480.1C488.1 480.7 487.9 486.7 490.2 487.5C492.5 488.2 492.3 488.3 494.6 487.5C496.9 486.7 496.7 482.0 499.0 479.6C501.3 477.2 501.1 463.1 503.4 463.1C505.7 463.1 505.5 477.9 507.8 479.6C510.0 481.3 509.9 480.1 512.1 480.1C514.4 480.1 514.3 479.2 516.5 479.6C518.8 480.0 518.6 483.3 520.9 484.4C523.2 485.4 523.0 490.6 525.3 490.3C527.6 490.1 527.4 482.5 529.7 481.5C532.0 480.5 531.8 480.4 534.1 480.5C536.3 480.6 536.2 482.5 538.5 482.5C540.7 482.4 540.6 479.6 542.8 480.1C545.1 480.6 544.9 486.4 547.2 487.5C549.5 488.6 549.3 490.6 551.6 490.8C553.9 491.0 553.7 489.8 556.0 489.6C558.3 489.4 558.1 488.9 560.4 488.7C562.7 488.4 562.5 487.4 564.8 487.0C567.0 486.6 566.9 485.0 569.1 485.1C571.4 485.1 571.3 487.3 573.5 487.5C575.8 487.6 575.6 486.4 577.9 486.5C580.2 486.7 580.0 488.9 582.3 488.9C584.6 489.0 584.4 487.5 586.7 487.0C589.0 486.4 588.8 483.8 591.1 483.4C593.3 483.1 593.2 483.6 595.5 483.4C597.7 483.2 597.6 482.6 599.8 481.5C602.1 480.4 601.9 473.7 604.2 472.7C606.5 471.7 606.3 469.8 608.6 471.5C610.9 473.1 610.7 487.6 613.0 489.4C615.3 491.1 615.1 490.2 617.4 488.9C619.7 487.6 619.5 477.3 621.8 476.0C624.0 474.7 623.9 475.9 626.1 476.0C628.4 476.1 628.3 476.7 630.5 477.2C632.8 477.7 632.6 480.9 634.9 480.5C637.2 480.2 637.0 472.9 639.3 473.4C641.6 473.9 641.4 484.3 643.7 485.6C646.0 486.8 645.8 486.9 648.1 485.8C650.3 484.7 650.2 476.1 652.5 474.8C654.7 473.5 654.6 473.6 656.8 472.7C659.1 471.7 658.9 465.5 661.2 465.5C663.5 465.5 663.3 471.5 665.6 472.7C667.9 473.8 667.7 475.0 670.0 476.7C672.3 478.4 672.1 488.2 674.4 489.4C676.7 490.6 676.5 491.0 678.8 488.9C681.0 486.9 680.9 470.3 683.1 468.8C685.4 467.4 685.3 473.6 687.5 474.1C689.8 474.6 689.6 473.7 691.9 473.9C694.2 474.0 694.0 474.9 696.3 475.3C698.6 475.7 698.4 476.6 700.7 477.7C703.0 478.8 702.8 485.6 705.1 486.5C707.3 487.5 707.2 488.2 709.5 487.0C711.7 485.8 711.6 476.0 713.8 474.8C716.1 473.6 715.9 475.8 718.2 475.3C720.5 474.8 720.3 470.1 722.6 469.6C724.9 469.0 724.7 468.8 727.0 469.6C729.3 470.3 729.1 475.0 731.4 476.7C733.7 478.4 733.5 485.4 735.8 486.5C738.0 487.6 737.9 488.4 740.1 487.5C742.4 486.6 742.3 478.5 744.5 477.7C746.8 476.9 746.6 479.6 748.9 479.6C751.2 479.5 751.0 477.4 753.3 477.2C755.6 477.0 755.4 477.3 757.7 477.2C760.0 477.1 759.8 475.0 762.1 476.0C764.3 477.0 764.2 485.9 766.5 487.0C768.7 488.1 768.6 487.6 770.8 487.0C773.1 486.4 772.9 481.1 775.2 480.5C777.5 480.0 777.3 482.0 779.6 481.5C781.9 481.0 781.7 476.7 784.0 475.8C786.3 474.8 786.1 471.4 788.4 472.2C790.7 472.9 790.5 481.8 792.8 483.4C795.0 485.0 794.9 487.8 797.1 488.4C799.4 489.1 799.3 490.7 801.5 489.6C803.8 488.6 803.6 479.8 805.9 477.7C808.2 475.6 808.0 470.1 810.3 468.8C812.6 467.6 812.4 464.7 814.7 465.0C817.0 465.3 816.8 474.0 819.1 471.7C821.3 469.4 821.2 442.0 823.5 441.6C825.7 441.2 825.6 464.7 827.8 467.9C830.1 471.1 829.9 473.3 832.2 473.4C834.5 473.4 834.3 468.6 836.6 468.4C838.9 468.1 838.7 470.4 841.0 470.7C843.3 471.1 843.1 471.7 845.4 471.7C847.7 471.7 847.5 470.8 849.8 470.3C852.0 469.7 851.9 470.8 854.1 466.0C856.4 461.1 856.3 422.8 858.5 421.5C860.8 420.2 860.6 450.0 862.9 453.3C865.2 456.6 865.0 456.1 867.3 454.7C869.6 453.4 869.4 442.2 871.7 439.7C874.0 437.1 873.8 428.5 876.1 429.4C878.3 430.3 878.2 444.4 880.5 448.3C882.7 452.1 882.6 464.3 884.8 467.9C887.1 471.5 886.9 483.0 889.2 484.4C891.5 485.7 891.3 483.5 893.6 481.5C895.9 479.5 895.7 465.4 898.0 464.1C900.3 462.7 900.1 467.6 902.4 467.9C904.7 468.2 904.5 466.6 906.8 466.9C909.0 467.3 908.9 470.9 911.1 471.5C913.4 472.0 913.3 471.5 915.5 472.7C917.8 473.9 917.6 482.0 919.9 483.4C922.2 484.8 922.0 487.8 924.3 486.5C926.6 485.3 926.4 472.8 928.7 470.7C931.0 468.7 930.8 466.7 933.1 466.0C935.3 465.2 935.2 465.0 937.5 463.1C939.7 461.2 939.6 446.9 941.8 446.8C944.1 446.8 943.9 458.9 946.2 462.1C948.5 465.4 948.3 477.3 950.6 479.6C952.9 481.9 952.7 485.9 955.0 485.1C957.3 484.3 957.1 474.0 959.4 471.7C961.7 469.4 961.5 462.9 963.8 462.1C966.0 461.4 965.9 464.3 968.1 464.3C970.4 464.3 970.3 462.3 972.5 462.4C974.8 462.5 975.8 465.2 976.9 465.5" fill="none" stroke="#40979b" stroke-width="1.3" stroke-linejoin="round"/>
<circle cx="183.3" cy="479.1" r="2.05" fill="#fff" stroke="#434180" stroke-width="1.3"/>
<circle cx="183.3" cy="486.8" r="2.05" fill="#fff" stroke="#40979b" stroke-width="1.3"/>
<circle cx="235.9" cy="462.1" r="2.05" fill="#fff" stroke="#434180" stroke-width="1.3"/>
<circle cx="235.9" cy="477.2" r="2.05" fill="#fff" stroke="#40979b" stroke-width="1.3"/>
<circle cx="288.5" cy="463.3" r="2.05" fill="#fff" stroke="#434180" stroke-width="1.3"/>
<circle cx="288.5" cy="478.6" r="2.05" fill="#fff" stroke="#40979b" stroke-width="1.3"/>
<circle cx="341.1" cy="485.6" r="2.05" fill="#fff" stroke="#434180" stroke-width="1.3"/>
<circle cx="341.1" cy="488.9" r="2.05" fill="#fff" stroke="#40979b" stroke-width="1.3"/>
<circle cx="393.8" cy="444.5" r="2.05" fill="#fff" stroke="#434180" stroke-width="1.3"/>
<circle cx="393.8" cy="473.4" r="2.05" fill="#fff" stroke="#40979b" stroke-width="1.3"/>
<circle cx="446.4" cy="415.3" r="2.05" fill="#fff" stroke="#434180" stroke-width="1.3"/>
<circle cx="446.4" cy="475.8" r="2.05" fill="#fff" stroke="#40979b" stroke-width="1.3"/>
<circle cx="499.0" cy="373.5" r="2.05" fill="#fff" stroke="#434180" stroke-width="1.3"/>
<circle cx="499.0" cy="479.6" r="2.05" fill="#fff" stroke="#40979b" stroke-width="1.3"/>
<circle cx="551.6" cy="441.6" r="2.05" fill="#fff" stroke="#434180" stroke-width="1.3"/>
<circle cx="551.6" cy="490.8" r="2.05" fill="#fff" stroke="#40979b" stroke-width="1.3"/>
<circle cx="604.2" cy="436.3" r="2.05" fill="#fff" stroke="#434180" stroke-width="1.3"/>
<circle cx="604.2" cy="472.7" r="2.05" fill="#fff" stroke="#40979b" stroke-width="1.3"/>
<circle cx="656.8" cy="352.9" r="2.05" fill="#fff" stroke="#434180" stroke-width="1.3"/>
<circle cx="656.8" cy="472.7" r="2.05" fill="#fff" stroke="#40979b" stroke-width="1.3"/>
<circle cx="709.5" cy="391.9" r="2.05" fill="#fff" stroke="#434180" stroke-width="1.3"/>
<circle cx="709.5" cy="487.0" r="2.05" fill="#fff" stroke="#40979b" stroke-width="1.3"/>
<circle cx="762.1" cy="382.3" r="2.05" fill="#fff" stroke="#434180" stroke-width="1.3"/>
<circle cx="762.1" cy="476.0" r="2.05" fill="#fff" stroke="#40979b" stroke-width="1.3"/>
<circle cx="814.7" cy="395.0" r="2.05" fill="#fff" stroke="#434180" stroke-width="1.3"/>
<circle cx="814.7" cy="465.0" r="2.05" fill="#fff" stroke="#40979b" stroke-width="1.3"/>
<circle cx="867.3" cy="397.4" r="2.05" fill="#fff" stroke="#434180" stroke-width="1.3"/>
<circle cx="867.3" cy="454.7" r="2.05" fill="#fff" stroke="#40979b" stroke-width="1.3"/>
<circle cx="919.9" cy="428.0" r="2.05" fill="#fff" stroke="#434180" stroke-width="1.3"/>
<circle cx="919.9" cy="483.4" r="2.05" fill="#fff" stroke="#40979b" stroke-width="1.3"/>
<circle cx="972.5" cy="415.8" r="2.05" fill="#fff" stroke="#434180" stroke-width="1.3"/>
<circle cx="972.5" cy="462.4" r="2.05" fill="#fff" stroke="#40979b" stroke-width="1.3"/>
</svg>
</div>
</body>
</html>
